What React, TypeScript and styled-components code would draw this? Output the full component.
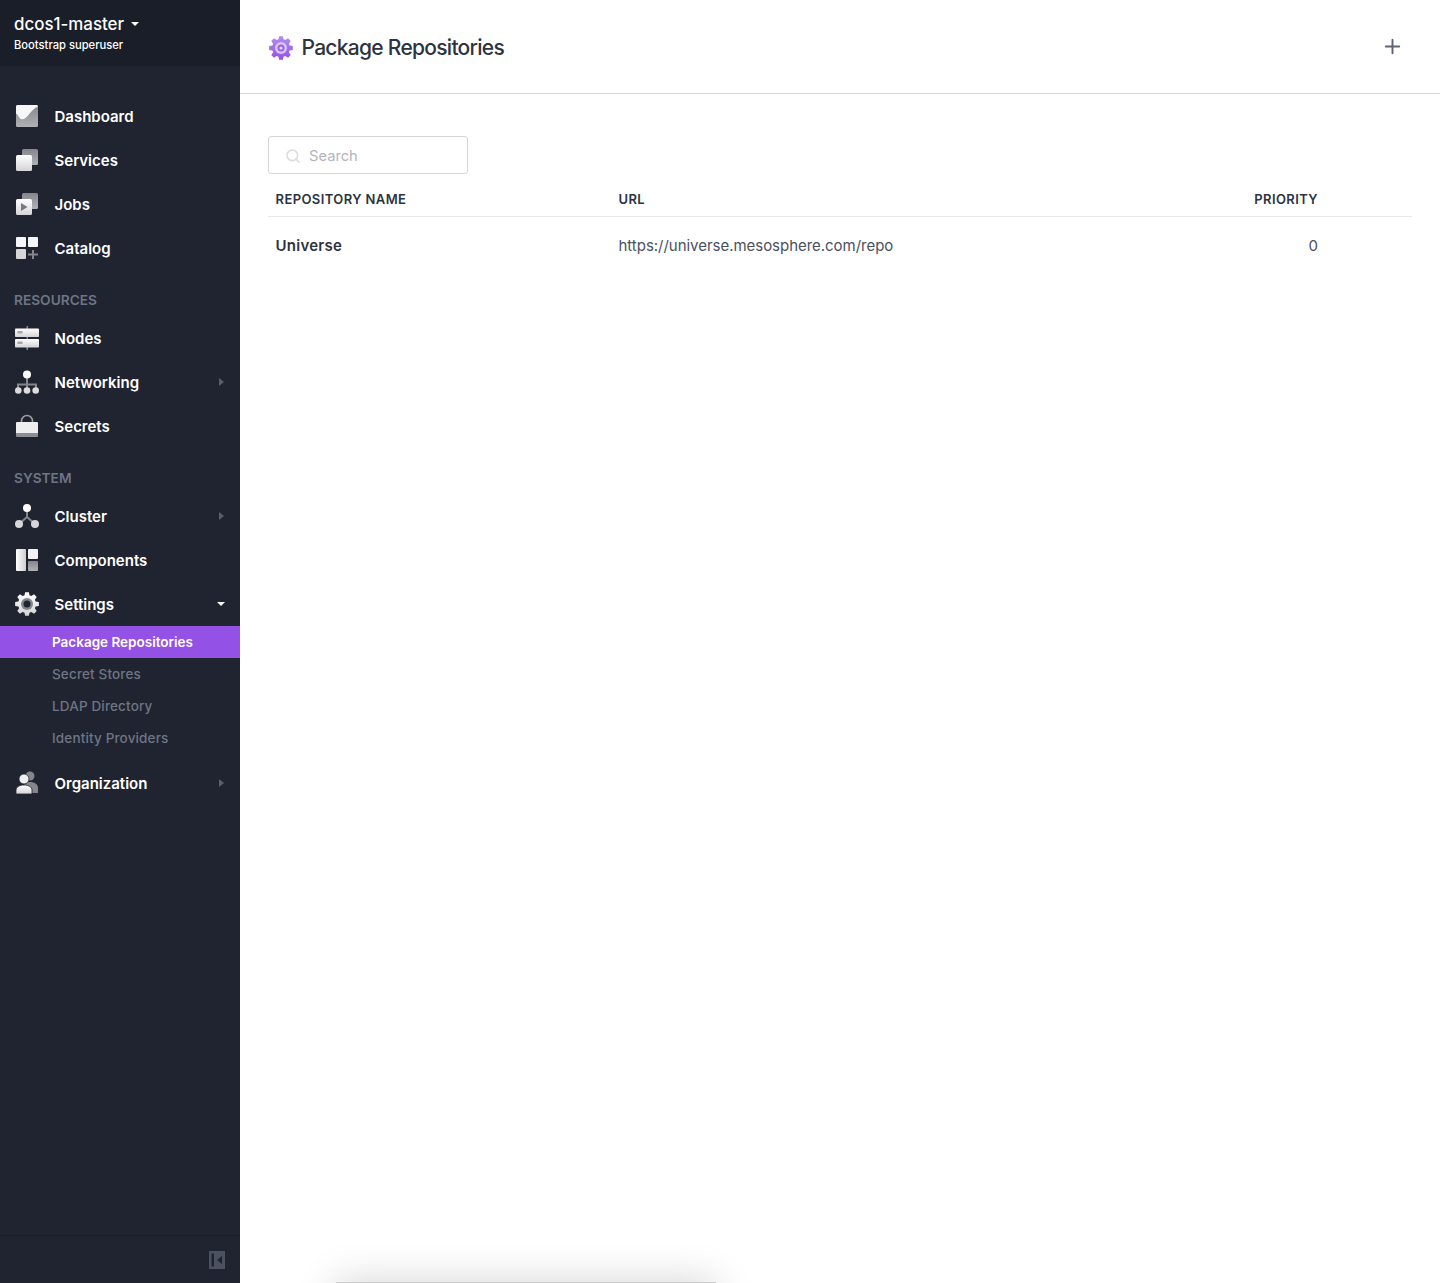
import React from "react";
import styled, { createGlobalStyle } from "styled-components";
import { Plus, Search } from "lucide-react";

const GlobalStyle = createGlobalStyle`
  html, body {
    margin: 0;
    padding: 0;
    background: #fff;
    font-family: Inter, "Noto Sans", sans-serif;
  }
  * { box-sizing: border-box; }
`;

const gearPath = (cx: number, cy: number, outer: number, inner: number, teeth = 8) => {
  const pts: string[] = [];
  const step = (Math.PI * 2) / teeth;
  for (let i = 0; i < teeth; i++) {
    const a = i * step - Math.PI / 2;
    const at = (r: number, t: number) =>
      `${(cx + r * Math.cos(a + t)).toFixed(2)} ${(cy + r * Math.sin(a + t)).toFixed(2)}`;
    pts.push(at(inner, -step * 0.36), at(outer, -step * 0.2), at(outer, step * 0.2), at(inner, step * 0.36));
  }
  return `M${pts.join("L")}Z`;
};

const Defs = () => (
  <defs>
    <linearGradient id="lt" x1="0" y1="0" x2="0" y2="1">
      <stop offset="0" stopColor="#ffffff" />
      <stop offset="1" stopColor="#d4d4d6" />
    </linearGradient>
    <linearGradient id="dk" x1="0" y1="0" x2="0" y2="1">
      <stop offset="0" stopColor="#85868b" />
      <stop offset="1" stopColor="#b0b1b5" />
    </linearGradient>
    <linearGradient id="hz" x1="0" y1="0" x2="1" y2="0">
      <stop offset="0" stopColor="#ffffff" />
      <stop offset="1" stopColor="#cfcfd2" />
    </linearGradient>
  </defs>
);

const IconSvg = ({ children }: { children: React.ReactNode }) => (
  <svg width="24" height="24" viewBox="0 0 24 24">
    <Defs />
    {children}
  </svg>
);

const DashboardIcon = () => (
  <IconSvg>
    <rect x="1" y="1" width="22" height="22" rx="1.5" fill="url(#dk)" />
    <path d="M1 2.5A1.5 1.5 0 0 1 2.500 1h19A1.5 1.5 0 0 1 23 2.500C19 4 16 8 13.500 11 11 14 9 15.500 6.700 15.300 4 15 3 10 1 9.500Z" fill="#f7f7f8" />
  </IconSvg>
);

const ServicesIcon = () => (
  <IconSvg>
    <rect x="7" y="1" width="16" height="16" rx="1.500" fill="url(#dk)" />
    <rect x="1" y="7" width="16" height="16" rx="1.500" fill="url(#lt)" />
  </IconSvg>
);

const JobsIcon = () => (
  <IconSvg>
    <rect x="7" y="1" width="16" height="16" rx="1.500" fill="url(#dk)" />
    <rect x="1" y="7" width="16" height="16" rx="1.500" fill="url(#lt)" />
    <path d="M6 11l6.500 4-6.500 4z" fill="#77787d" />
  </IconSvg>
);

const CatalogIcon = () => (
  <IconSvg>
    <rect x="1" y="1" width="10" height="10" rx="1" fill="#f6f6f7" />
    <rect x="13" y="1" width="10" height="10" rx="1" fill="#f6f6f7" />
    <rect x="1" y="13" width="10" height="10" rx="1" fill="#d6d6d8" />
    <path d="M17 14h2v3.500h4v2h-4V23h-2v-3.500h-4v-2h4z" fill="#85868b" />
  </IconSvg>
);

const NodesIcon = () => (
  <IconSvg>
    <rect x="11.500" y="0" width="1.500" height="24" fill="#85868b" />
    <rect x="0" y="2.500" width="24" height="8.500" rx=".8" fill="url(#lt)" />
    <rect x="0" y="13" width="24" height="8.500" rx=".8" fill="url(#lt)" />
    <rect x="2.500" y="5" width="5" height="2.500" fill="#a6a7ab" />
    <rect x="2.500" y="15.500" width="5" height="2.500" fill="#a6a7ab" />
  </IconSvg>
);

const NetworkingIcon = () => (
  <IconSvg>
    <path d="M12 6v14M3 20v-5.500h18V20" fill="none" stroke="#85868b" strokeWidth="2" />
    <circle cx="12" cy="4.500" r="4" fill="#fff" />
    <circle cx="3.300" cy="20.500" r="3.300" fill="#dcdcde" />
    <circle cx="12" cy="20.500" r="3.300" fill="#dcdcde" />
    <circle cx="20.700" cy="20.500" r="3.300" fill="#dcdcde" />
  </IconSvg>
);

const SecretsIcon = () => (
  <IconSvg>
    <path d="M6.500 9V7a5.500 5.500 0 0 1 11 0v2" fill="none" stroke="#9d9ea3" strokeWidth="1.600" />
    <path d="M2 8h20a1 1 0 0 1 1 1v10H1V9a1 1 0 0 1 1-1z" fill="#efeff0" />
    <path d="M1 19h22v3a1 1 0 0 1-1 1H2a1 1 0 0 1-1-1z" fill="#8d8e93" />
  </IconSvg>
);

const ClusterIcon = () => (
  <IconSvg>
    <path d="M12 5v8L4 20M12 13l8 7" fill="none" stroke="#85868b" strokeWidth="2" />
    <circle cx="12" cy="4" r="4" fill="#fff" />
    <circle cx="4" cy="20" r="4" fill="#d6d6d8" />
    <circle cx="20" cy="20" r="4" fill="#d6d6d8" />
  </IconSvg>
);

const ComponentsIcon = () => (
  <IconSvg>
    <rect x="1" y="1" width="10" height="22" rx="1" fill="url(#hz)" />
    <rect x="13" y="1" width="10" height="10" rx="1" fill="#f2f2f3" />
    <rect x="13" y="13" width="10" height="10" rx="1" fill="url(#dk)" />
  </IconSvg>
);

const SettingsIcon = () => (
  <IconSvg>
    <path d={gearPath(12, 12, 12, 9)} fill="url(#lt)" />
    <circle cx="12" cy="12" r="6" fill="#85868b" />
    <circle cx="12" cy="12" r="3.500" fill="#1f2430" />
  </IconSvg>
);

const OrganizationIcon = () => (
  <IconSvg>
    <circle cx="15" cy="5" r="4.500" fill="#85868b" />
    <path d="M8 18c0-5 3-7 7-7s8 2 8 6v5H8z" fill="#85868b" />
    <circle cx="9" cy="8" r="5" fill="#efeff0" stroke="#1f2430" strokeWidth=".8" />
    <path d="M1 23v-4c0-3 3.500-5 8-5s8 2 8 5v4z" fill="url(#lt)" stroke="#1f2430" strokeWidth=".8" />
  </IconSvg>
);

const PageGearIcon = () => (
  <svg width="24" height="24" viewBox="0 0 24 24">
    <defs>
      <linearGradient id="pg" x1="0" y1="0" x2="0" y2="1">
        <stop offset="0" stopColor="#b28fec" />
        <stop offset="1" stopColor="#9351e5" />
      </linearGradient>
    </defs>
    <path d={gearPath(12, 12, 12, 9)} fill="url(#pg)" />
    <circle cx="12" cy="12" r="6" fill="#d9c4f5" />
    <circle cx="12" cy="12" r="3.500" fill="#9a62e6" />
    <circle cx="12" cy="12" r="1.500" fill="#e9dcfa" />
  </svg>
);

const CollapseIcon = () => (
  <svg width="16" height="18" viewBox="0 0 16 18">
    <rect width="16" height="18" fill="#4c5160" />
    <rect x="2.500" y="2.500" width="2.500" height="13" fill="#1f2430" />
    <path d="M13 5v8L8 9z" fill="#1f2430" />
  </svg>
);

const Page = styled.div`
  position: relative;
  display: flex;
  width: 100%;
  height: 100vh;
  overflow: hidden;
`;

const Sidebar = styled.aside`
  display: flex;
  flex-direction: column;
  flex: 0 0 240px;
  background: #1f2430;
`;

const SidebarHeader = styled.div`
  height: 66px;
  padding: 13px 14px 0;
  background: #1a1e28;
`;

const ClusterName = styled.div`
  display: flex;
  align-items: center;
  gap: 7px;
  height: 22px;
  font-size: 16.900px;
  font-weight: 500;
  color: #fff;
`;

const CaretDown = styled.span<{ $size?: number }>`
  width: 0;
  height: 0;
  border-left: ${(p) => p.$size ?? 4}px solid transparent;
  border-right: ${(p) => p.$size ?? 4}px solid transparent;
  border-top: ${(p) => p.$size ?? 4}px solid #fff;
`;

const UserName = styled.div`
  margin-top: 2px;
  font-size: 11.200px;
  line-height: 16px;
  font-weight: 500;
  color: #fff;
`;

const Nav = styled.nav`
  flex: 1;
  padding-top: 28px;
`;

const NavRow = styled.div`
  display: flex;
  align-items: center;
  height: 44px;
  padding: 0 15px;
  font-size: 15px;
  font-weight: 600;
  color: #fff;
`;

const NavIconBox = styled.span`
  display: flex;
  flex: 0 0 24px;
  margin-right: 15.500px;
`;

const NavLabel = styled.span`
  flex: 1;
`;

const CaretRight = styled.span`
  margin-right: 1px;
  width: 0;
  height: 0;
  border-top: 4px solid transparent;
  border-bottom: 4px solid transparent;
  border-left: 5px solid #5a5f6d;
`;

const SectionLabel = styled.div`
  height: 46px;
  padding: 21px 14px 0;
  font-size: 13.700px;
  line-height: 18px;
  font-weight: 600;
  color: #6f7584;
`;

const SubRow = styled.div<{ $active?: boolean }>`
  display: flex;
  align-items: center;
  height: 32px;
  padding-left: 52px;
  font-size: 13.500px;
  font-weight: ${(p) => (p.$active ? 600 : 500)};
  letter-spacing: ${(p) => (p.$active ? 0 : 0.15)}px;
  color: ${(p) => (p.$active ? "#fff" : "#6f7584")};
  background: ${(p) => (p.$active ? "#9351e5" : "transparent")};
`;

const SubList = styled.div`
  margin-bottom: 7px;
`;

const SidebarFooter = styled.div`
  display: flex;
  justify-content: flex-end;
  align-items: center;
  height: 48px;
  padding: 0 15px;
  border-top: 1px solid #191d27;
`;

const Main = styled.main`
  flex: 1;
  min-width: 0;
`;

const PageHeader = styled.header`
  display: flex;
  align-items: center;
  height: 94px;
  padding: 2px 36px 0 29px;
  border-bottom: 1px solid #d8d8da;
`;

const Title = styled.h1`
  flex: 1;
  margin: 0 0 0 8.500px;
  font-size: 21px;
  font-weight: 500;
  letter-spacing: -0.72px;
  color: #2d3340;
`;

const AddButton = styled.span`
  display: flex;
  margin-top: -2px;
  color: #5c6270;
`;

const Content = styled.div`
  padding: 42px 28px 0;
`;

const SearchBox = styled.div`
  display: flex;
  align-items: center;
  gap: 8px;
  width: 200px;
  height: 38px;
  padding: 1px 0 0 16px;
  border: 1px solid #d6d6d9;
  border-radius: 3px;
  font-size: 14.700px;
  color: #b4b5ba;
`;

const TableRow = styled.div<{ $head?: boolean }>`
  display: grid;
  grid-template-columns: 343px 1fr 120px;
  align-items: center;
  height: ${(p) => (p.$head ? "43px" : "56px")};
  padding: ${(p) => (p.$head ? "8px" : "0")} 94px 0 7.500px;
  border-bottom: ${(p) => (p.$head ? "1px solid #e8e8ea" : "0")};
`;

const HeadCell = styled.div<{ $right?: boolean }>`
  font-size: 13px;
  font-weight: 600;
  letter-spacing: 0.4px;
  color: #2d3340;
  text-align: ${(p) => (p.$right ? "right" : "left")};
`;

const NameCell = styled.div`
  font-size: 15px;
  font-weight: 600;
  letter-spacing: 0.25px;
  color: #2d3340;
`;

const Cell = styled.div<{ $right?: boolean }>`
  font-size: 15px;
  letter-spacing: -0.03px;
  color: #4a505e;
  text-align: ${(p) => (p.$right ? "right" : "left")};
`;

const PeekingCard = styled.div`
  position: absolute;
  left: 336px;
  top: 1282px;
  width: 380px;
  height: 60px;
  background: #ccc;
  box-shadow: 0 0 40px rgba(0, 0, 0, 0.18);
`;

type Item = { label: string; icon: React.ReactNode; more?: boolean };

const top: Item[] = [
  { label: "Dashboard", icon: <DashboardIcon /> },
  { label: "Services", icon: <ServicesIcon /> },
  { label: "Jobs", icon: <JobsIcon /> },
  { label: "Catalog", icon: <CatalogIcon /> },
];

const resources: Item[] = [
  { label: "Nodes", icon: <NodesIcon /> },
  { label: "Networking", icon: <NetworkingIcon />, more: true },
  { label: "Secrets", icon: <SecretsIcon /> },
];

const system: Item[] = [
  { label: "Cluster", icon: <ClusterIcon />, more: true },
  { label: "Components", icon: <ComponentsIcon /> },
];

const NavItem = ({ item }: { item: Item }) => (
  <NavRow>
    <NavIconBox>{item.icon}</NavIconBox>
    <NavLabel>{item.label}</NavLabel>
    {item.more && <CaretRight />}
  </NavRow>
);

export default function App() {
  return (
    <Page>
      <GlobalStyle />
      <Sidebar>
        <SidebarHeader>
          <ClusterName>
            dcos1-master <CaretDown />
          </ClusterName>
          <UserName>Bootstrap superuser</UserName>
        </SidebarHeader>
        <Nav>
          {top.map((i) => (
            <NavItem key={i.label} item={i} />
          ))}
          <SectionLabel>RESOURCES</SectionLabel>
          {resources.map((i) => (
            <NavItem key={i.label} item={i} />
          ))}
          <SectionLabel>SYSTEM</SectionLabel>
          {system.map((i) => (
            <NavItem key={i.label} item={i} />
          ))}
          <NavRow>
            <NavIconBox>
              <SettingsIcon />
            </NavIconBox>
            <NavLabel>Settings</NavLabel>
            <CaretDown />
          </NavRow>
          <SubList>
            <SubRow $active>Package Repositories</SubRow>
            <SubRow>Secret Stores</SubRow>
            <SubRow>LDAP Directory</SubRow>
            <SubRow>Identity Providers</SubRow>
          </SubList>
          <NavItem item={{ label: "Organization", icon: <OrganizationIcon />, more: true }} />
        </Nav>
        <SidebarFooter>
          <CollapseIcon />
        </SidebarFooter>
      </Sidebar>
      <Main>
        <PageHeader>
          <PageGearIcon />
          <Title>Package Repositories</Title>
          <AddButton>
            <Plus size={23} strokeWidth={2} />
          </AddButton>
        </PageHeader>
        <Content>
          <SearchBox>
            <Search size={16} strokeWidth={2.4} color="#dcdcdf" />
            Search
          </SearchBox>
          <TableRow $head>
            <HeadCell>REPOSITORY NAME</HeadCell>
            <HeadCell>URL</HeadCell>
            <HeadCell $right>PRIORITY</HeadCell>
          </TableRow>
          <TableRow>
            <NameCell>Universe</NameCell>
            <Cell>https://universe.mesosphere.com/repo</Cell>
            <Cell $right>0</Cell>
          </TableRow>
        </Content>
      </Main>
      <PeekingCard />
    </Page>
  );
}
